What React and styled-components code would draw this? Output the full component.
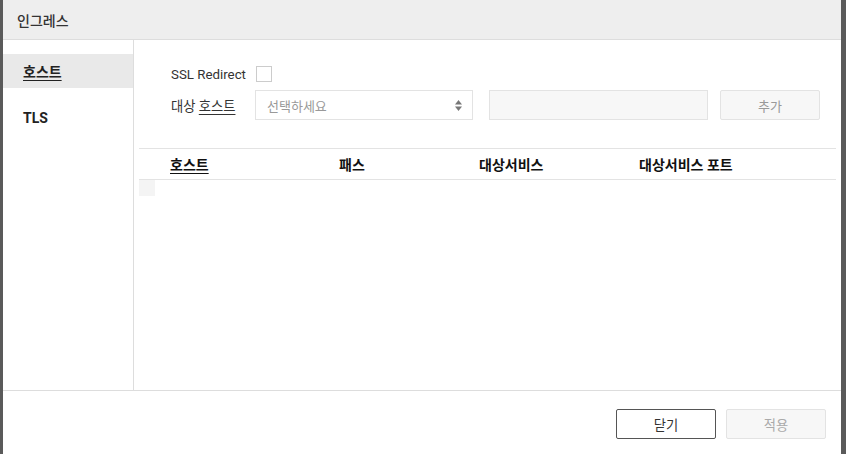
import React from "react";
import styled, { createGlobalStyle } from "styled-components";

const GlobalStyle = createGlobalStyle`
    html, body {
        margin: 0;
        padding: 0;
        background: #5a5a5a;
    }
    body {
        font-family: Roboto, "Noto Sans CJK KR", sans-serif;
        font-size: 13px;
        color: #222;
    }
`;

const Backdrop = styled.div`
    width: 846px;
    height: 454px;
    padding: 0 5px 0 3px;
    box-sizing: border-box;
    background: #5a5a5a;
    overflow: hidden;
`;

const Dialog = styled.div`
    background: #fff;
    height: 470px;
    display: flex;
    flex-direction: column;
`;

const Header = styled.div`
    height: 39px;
    background: #eeeeee;
    border-bottom: 1px solid #dddddd;
    display: flex;
    align-items: center;
    padding-left: 14px;
    font-size: 14px;
    font-weight: 500;
    color: #333;
`;

const Body = styled.div`
    display: flex;
    height: 350px;
    border-bottom: 1px solid #dddddd;
`;

const Sidebar = styled.div`
    width: 130px;
    border-right: 1px solid #dddddd;
    padding-top: 14px;
    display: flex;
    flex-direction: column;
    gap: 13px;
`;

const SideItem = styled.div`
    height: 34px;
    display: flex;
    align-items: center;
    padding-left: 20px;
    font-weight: 700;
    font-size: 14px;
    color: #222;
    background: ${(p) => (p.$active ? "#e9e9e9" : "transparent")};
    text-decoration: ${(p) => (p.$active ? "underline" : "none")};
    text-underline-offset: 3px;
`;

const Content = styled.div`
    flex: 1;
    padding: 22px 5px 0 5px;
`;

const Form = styled.div`
    padding: 0 16px 0 32px;
    display: flex;
    flex-direction: column;
    gap: 4px;
`;

const FormRow = styled.div`
    display: flex;
    align-items: center;
    height: ${(p) => p.$h}px;
`;

const Label = styled.div`
    width: 84px;
    flex-shrink: 0;
    color: #333;
    font-size: 13.3px;
    span {
        text-decoration: underline;
        text-underline-offset: 3px;
    }
`;

const Checkbox = styled.div`
    width: 14px;
    height: 14px;
    border: 1px solid #cccccc;
    margin-left: 1px;
    background: #fff;
`;

const Select = styled.div`
    width: 195px;
    height: 28px;
    border: 1px solid #e3e3e3;
    display: flex;
    align-items: center;
    justify-content: space-between;
    padding: 0 10px 0 11px;
    color: #999;
`;

const TextInput = styled.div`
    width: 217px;
    height: 28px;
    margin-left: 16px;
    border: 1px solid #e3e3e3;
    background: #f7f7f7;
`;

const GhostButton = styled.div`
    margin-left: auto;
    width: 98px;
    height: 28px;
    border: 1px solid #e3e3e3;
    border-radius: 2px;
    background: #f7f7f7;
    color: #999;
    display: flex;
    align-items: center;
    justify-content: center;
`;

const Table = styled.div`
    margin-top: 28px;
    border-top: 1px solid #e3e3e3;
`;

const HeadRow = styled.div`
    display: grid;
    grid-template-columns: 16px 169px 140px 160px 1fr;
    height: 30px;
    align-items: center;
    border-bottom: 1px solid #e3e3e3;
`;

const HeadCell = styled.div`
    padding-left: 15px;
    font-weight: 700;
    font-size: 14px;
    color: #111;
    text-decoration: ${(p) => (p.$link ? "underline" : "none")};
    text-underline-offset: 3px;
`;

const EmptyCell = styled.div`
    width: 16px;
    height: 16px;
    background: #f4f4f4;
`;

const Footer = styled.div`
    display: flex;
    justify-content: flex-end;
    gap: 10px;
    padding: 18px 15px 0 0;
`;

const FooterButton = styled.div`
    width: 98px;
    height: 28px;
    border: 1px solid ${(p) => (p.$disabled ? "#e3e3e3" : "#555")};
    border-radius: 2px;
    background: ${(p) => (p.$disabled ? "#f7f7f7" : "#fff")};
    color: ${(p) => (p.$disabled ? "#aaa" : "#333")};
    font-size: 13.3px;
    display: flex;
    align-items: center;
    justify-content: center;
`;

const Arrows = () => (
    <svg width="7" height="11" viewBox="0 0 7 11">
        <path d="M3.5 0 L7 4.5 L0 4.5 Z" fill="#777" />
        <path d="M3.5 11 L7 6.5 L0 6.5 Z" fill="#777" />
    </svg>
);

const App = () => {
    return (
        <>
            <GlobalStyle />
            <Backdrop>
                <Dialog>
                    <Header>인그레스</Header>
                    <Body>
                        <Sidebar>
                            <SideItem $active>호스트</SideItem>
                            <SideItem>TLS</SideItem>
                        </Sidebar>
                        <Content>
                            <Form>
                                <FormRow $h={24}>
                                    <Label>SSL Redirect</Label>
                                    <Checkbox />
                                </FormRow>
                                <FormRow $h={30}>
                                    <Label>대상 <span>호스트</span></Label>
                                    <Select>
                                        선택하세요
                                        <Arrows />
                                    </Select>
                                    <TextInput />
                                    <GhostButton>추가</GhostButton>
                                </FormRow>
                            </Form>
                            <Table>
                                <HeadRow>
                                    <div />
                                    <HeadCell $link>호스트</HeadCell>
                                    <HeadCell>패스</HeadCell>
                                    <HeadCell>대상서비스</HeadCell>
                                    <HeadCell>대상서비스 포트</HeadCell>
                                </HeadRow>
                                <EmptyCell />
                            </Table>
                        </Content>
                    </Body>
                    <Footer>
                        <FooterButton>닫기</FooterButton>
                        <FooterButton $disabled>적용</FooterButton>
                    </Footer>
                </Dialog>
            </Backdrop>
        </>
    );
};

export default App;
